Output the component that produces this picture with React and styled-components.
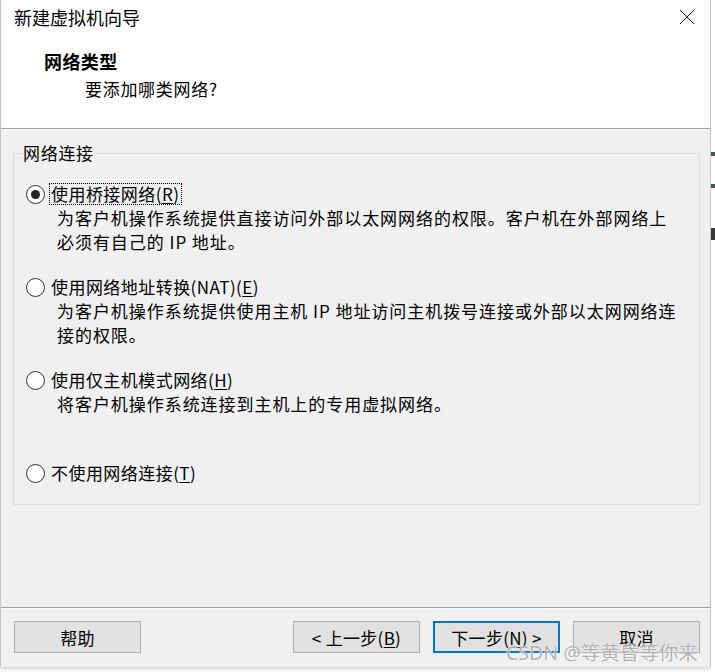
import React from "react";
import styled, { createGlobalStyle } from "styled-components";

const GlobalStyle = createGlobalStyle`
  html, body {
    margin: 0;
    padding: 0;
    background: #ffffff;
  }
  body {
    font-family: "Noto Sans CJK SC", "Noto Sans", sans-serif;
    color: #000;
  }
`;

const Page = styled.div`
  display: flex;
  width: 715px;
  height: 672px;
  overflow: hidden;
  position: relative;
`;

const Dialog = styled.div`
  width: 709px;
  height: 667px;
  border-left: 1px solid #c4c4c4;
  border-right: 1px solid #c4c4c4;
  display: flex;
  flex-direction: column;
  background: #f0f0f0;
  box-shadow: 0 2px 4px rgba(0, 0, 0, 0.18);
`;

const BackStrip = styled.div`
  flex: 1;
  display: flex;
  flex-direction: column;
  background: #fff;
`;

const Mark = styled.div`
  height: ${(p) => p.h}px;
  margin-top: ${(p) => p.top}px;
  background: ${(p) => p.color};
`;

const Header = styled.div`
  height: 128px;
  background: #fff;
  border-bottom: 1px solid #a0a0a0;
  display: flex;
  flex-direction: column;
`;

const TitleBar = styled.div`
  height: 34px;
  display: flex;
  align-items: center;
  justify-content: space-between;
  padding: 0 15px 0 13px;
`;

const Title = styled.div`
  font-size: 18px;
  line-height: 22px;
`;

const Close = styled.div`
  width: 16px;
  height: 16px;
  display: flex;
`;

const HeaderTitle = styled.div`
  margin-top: 16px;
  padding-left: 43px;
  font-size: 18px;
  font-weight: 700;
  line-height: 22px;
  letter-spacing: 0.4px;
`;

const HeaderSub = styled.div`
  margin-top: 6px;
  padding-left: 84px;
  font-size: 17px;
  line-height: 22px;
  letter-spacing: 0.7px;
`;

const Body = styled.div`
  flex: 1;
  padding: 13px 10px 0 12px;
  box-shadow: inset 0 1px #f8f8f8;
`;

const Group = styled.fieldset`
  margin: 0;
  min-width: 0;
  border: 1px solid #dcdcdc;
  padding: 19px 9px 20px 9px;
`;

const Legend = styled.legend`
  font-size: 17px;
  line-height: 22px;
  letter-spacing: 0.7px;
  padding: 0 1px 0 0;
`;

const Option = styled.div`
  height: ${(p) => (p.last ? "auto" : "93px")};
  display: flex;
  flex-direction: column;
`;

const OptionHead = styled.div`
  display: flex;
  align-items: center;
  height: 22px;
  padding-left: 3px;
`;

const Radio = styled.div`
  width: 17px;
  height: 17px;
  border: 1.3px solid #333;
  border-radius: 50%;
  background: #fff;
  display: flex;
  align-items: center;
  justify-content: center;
  flex-shrink: 0;
`;

const Dot = styled.div`
  width: 9px;
  height: 9px;
  border-radius: 50%;
  background: #222;
`;

const Label = styled.div`
  margin-left: 4px;
  padding: 0 2px 0 1px;
  font-size: 17px;
  line-height: 20px;
  letter-spacing: 0.45px;
  white-space: nowrap;
  border: 1px dotted ${(p) => (p.focused ? "#000" : "transparent")};
`;

const Key = styled.span`
  text-decoration: underline;
  text-underline-offset: 2px;
`;

const Desc = styled.div`
  margin-top: 2px;
  padding-left: 34px;
  font-size: 17px;
  line-height: 22px;
  letter-spacing: 0.95px;
  white-space: nowrap;
`;

const Footer = styled.div`
  border-top: 1px solid #a0a0a0;
  box-shadow: inset 0 1px #fbfbfb;
  padding: 13px 10px 14px 13px;
  display: flex;
  align-items: center;
`;

const Spacer = styled.div`
  flex: 1;
`;

const Button = styled.div`
  width: 127px;
  height: 32px;
  box-sizing: border-box;
  display: flex;
  align-items: center;
  justify-content: center;
  background: #e1e1e1;
  border: ${(p) => (p.primary ? "2px solid #0078d7" : "1px solid #adadad")};
  font-size: 17px;
  letter-spacing: 0.3px;
  margin-left: ${(p) => p.gap || 0}px;
  white-space: nowrap;
`;

const Watermark = styled.div`
  position: absolute;
  left: 506px;
  top: 642px;
  font-family: "Noto Sans", "Noto Sans CJK SC", sans-serif;
  font-size: 19.5px;
  line-height: 22px;
  color: rgba(110, 110, 110, 0.55);
  text-shadow: 0 0 1px #fff, 0 0 2px rgba(255, 255, 255, 0.8);
  white-space: nowrap;
`;

const options = [
  {
    label: "使用桥接网络(",
    key: "R",
    desc: ["为客户机操作系统提供直接访问外部以太网网络的权限。客户机在外部网络上", "必须有自己的 IP 地址。"],
    checked: true,
  },
  {
    label: "使用网络地址转换(NAT)(",
    key: "E",
    desc: ["为客户机操作系统提供使用主机 IP 地址访问主机拨号连接或外部以太网网络连", "接的权限。"],
  },
  {
    label: "使用仅主机模式网络(",
    key: "H",
    desc: ["将客户机操作系统连接到主机上的专用虚拟网络。"],
  },
  { label: "不使用网络连接(", key: "T", desc: [] },
];

export default function App() {
  return (
    <>
      <GlobalStyle />
      <Page>
        <Dialog>
          <Header>
            <TitleBar>
              <Title>新建虚拟机向导</Title>
              <Close>
                <svg width="16" height="16" viewBox="0 0 16 16">
                  <path d="M1 1 L15 15 M15 1 L1 15" stroke="#111" strokeWidth="1" fill="none" />
                </svg>
              </Close>
            </TitleBar>
            <HeaderTitle>网络类型</HeaderTitle>
            <HeaderSub>要添加哪类网络?</HeaderSub>
          </Header>
          <Body>
            <Group>
              <Legend>网络连接</Legend>
              {options.map((o, i) => (
                <Option key={o.key} last={i === options.length - 1}>
                  <OptionHead>
                    <Radio>{o.checked && <Dot />}</Radio>
                    <Label focused={o.checked}>
                      {o.label}
                      <Key>{o.key}</Key>)
                    </Label>
                  </OptionHead>
                  {o.desc.map((d) => (
                    <Desc key={d}>{d}</Desc>
                  ))}
                </Option>
              ))}
            </Group>
          </Body>
          <Footer>
            <Button>帮助</Button>
            <Spacer />
            <Button>
              &lt; 上一步(<Key>B</Key>)
            </Button>
            <Button primary gap={13}>
              下一步(<Key>N</Key>) &gt;
            </Button>
            <Button gap={13}>取消</Button>
          </Footer>
        </Dialog>
        <BackStrip>
          <Mark top={152} h={4} color="#4b5563" />
          <Mark top={28} h={4} color="#4b5563" />
          <Mark top={40} h={12} color="#3a3a3a" />
        </BackStrip>
        <Watermark>CSDN @等黄昏等你来</Watermark>
      </Page>
    </>
  );
}
